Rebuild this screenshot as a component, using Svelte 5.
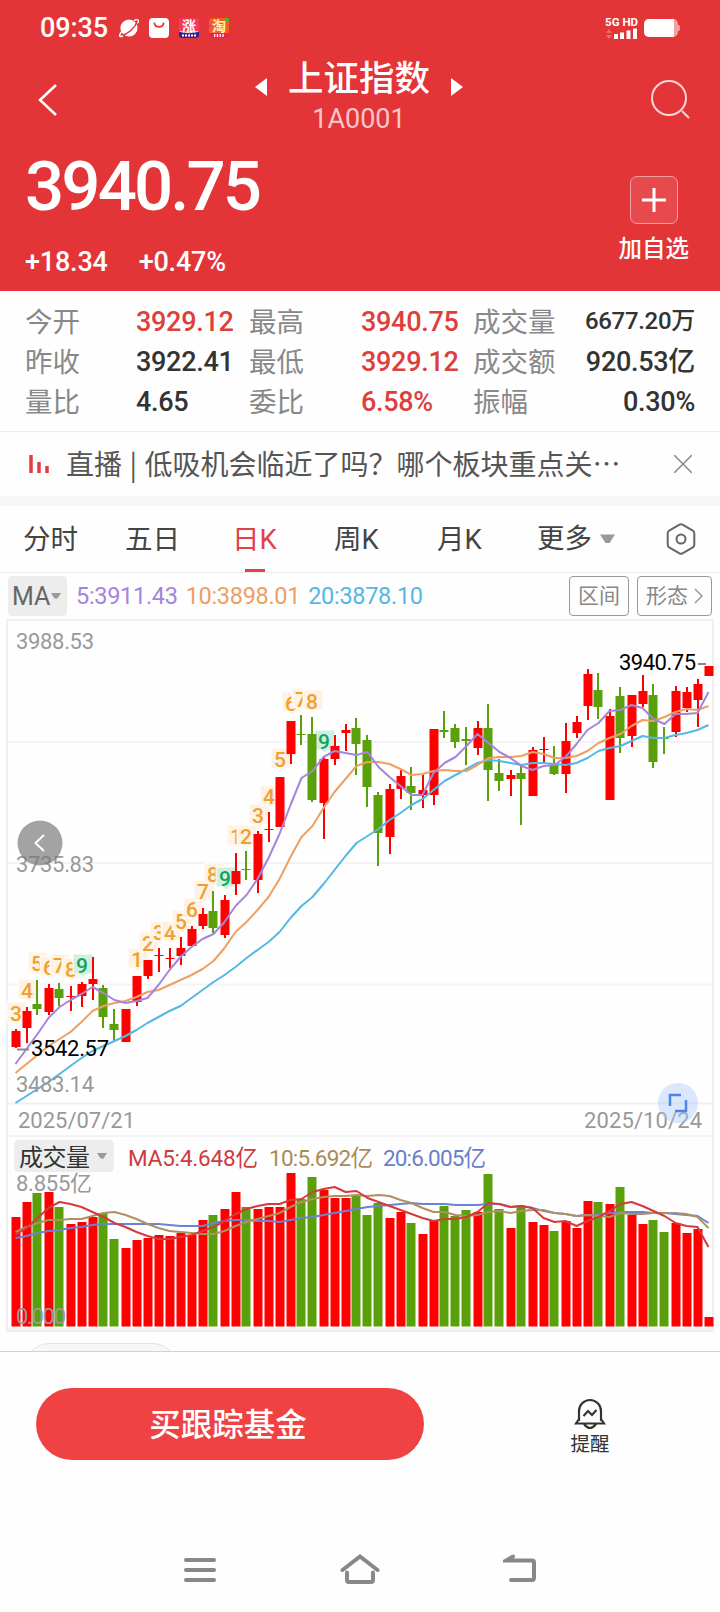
<script>
    const stats = [
        ["今开", "3929.12", "up", "最高", "3940.75", "up", "成交量", "6677.20万", "small"],
        ["昨收", "3922.41", "", "最低", "3929.12", "up", "成交额", "920.53亿", ""],
        ["量比", "4.65", "", "委比", "6.58%", "up", "振幅", "0.30%", "percent"],
    ];

    // direction, high, body top, body bottom, low, volume bar top
    const candles = [
        ["r", 1029, 1031, 1047, 1048, 1217],
        ["r", 1007, 1011, 1028, 1043, 1202],
        ["g", 980, 1004, 1009, 1015, 1193],
        ["r", 984, 988, 1012, 1015, 1192],
        ["g", 983, 989, 998, 1006, 1207],
        ["r", 986, 996, 997, 1011, 1224],
        ["r", 982, 984, 996, 1007, 1222],
        ["r", 957, 979, 984, 1000, 1217],
        ["g", 985, 988, 1017, 1028, 1213],
        ["g", 1009, 1024, 1030, 1042, 1239],
        ["r", 1009, 1009, 1042, 1042, 1248],
        ["r", 976, 976, 1002, 1006, 1240],
        ["r", 960, 960, 976, 979, 1238],
        ["r", 948, 955, 956, 972, 1235],
        ["r", 948, 958, 959, 968, 1236],
        ["r", 937, 948, 956, 965, 1233],
        ["r", 926, 929, 946, 947, 1235],
        ["r", 908, 914, 926, 929, 1220],
        ["g", 891, 911, 928, 933, 1215],
        ["r", 895, 900, 935, 938, 1209],
        ["r", 853, 871, 884, 895, 1192],
        ["g", 851, 869, 870, 880, 1207],
        ["r", 831, 834, 880, 893, 1209],
        ["r", 812, 829, 830, 842, 1207],
        ["r", 777, 777, 827, 827, 1207],
        ["r", 721, 721, 754, 764, 1173],
        ["g", 715, 734, 735, 745, 1199],
        ["g", 717, 734, 800, 802, 1177],
        ["r", 757, 759, 803, 839, 1190],
        ["r", 735, 746, 759, 765, 1198],
        ["r", 724, 730, 733, 751, 1198],
        ["g", 718, 728, 744, 775, 1195],
        ["g", 735, 740, 787, 807, 1215],
        ["g", 792, 795, 833, 866, 1203],
        ["r", 784, 789, 837, 854, 1218],
        ["r", 769, 776, 789, 799, 1212],
        ["g", 767, 786, 793, 810, 1223],
        ["r", 775, 790, 795, 808, 1234],
        ["r", 729, 729, 795, 805, 1220],
        ["g", 711, 730, 732, 738, 1206],
        ["g", 724, 728, 742, 748, 1216],
        ["g", 727, 739, 741, 765, 1210],
        ["r", 721, 728, 748, 755, 1212],
        ["g", 704, 728, 770, 801, 1174],
        ["g", 759, 773, 781, 791, 1209],
        ["r", 770, 775, 779, 796, 1228],
        ["g", 764, 773, 779, 825, 1207],
        ["r", 747, 750, 796, 796, 1222],
        ["r", 737, 749, 750, 763, 1225],
        ["g", 746, 763, 774, 775, 1231],
        ["r", 723, 741, 774, 793, 1221],
        ["r", 716, 722, 733, 738, 1228],
        ["r", 669, 674, 706, 720, 1201],
        ["g", 673, 690, 707, 719, 1202],
        ["r", 709, 716, 800, 800, 1204],
        ["g", 687, 696, 738, 753, 1187],
        ["r", 695, 695, 736, 747, 1215],
        ["r", 675, 691, 704, 707, 1224],
        ["g", 684, 695, 762, 768, 1220],
        ["g", 727, 738, 739, 754, 1232],
        ["r", 686, 691, 732, 737, 1223],
        ["r", 687, 692, 708, 712, 1233],
        ["r", 679, 684, 700, 727, 1229],
        ["r", 666, 666, 676, 676, 1317],
    ];

    // moving averages, one value per candle
    const ma5 = [1064, 1049, 1034, 1018, 1007, 1000, 994, 987, 993, 1000, 1003, 1001, 998, 985, 970, 957, 947, 939, 934, 922, 906, 895, 879, 858, 834, 805, 778, 771, 757, 751, 753, 755, 752, 767, 777, 786, 795, 795, 773, 763, 757, 746, 734, 743, 752, 758, 766, 770, 766, 765, 757, 744, 730, 723, 711, 710, 705, 708, 719, 724, 714, 714, 713, 692];
    const ma10 = [1073, 1064, 1055, 1046, 1039, 1032, 1022, 1011, 1006, 1003, 1001, 997, 992, 990, 985, 980, 975, 969, 961, 948, 932, 922, 910, 897, 879, 857, 837, 826, 808, 792, 779, 766, 762, 762, 764, 769, 775, 774, 771, 770, 771, 771, 765, 758, 757, 757, 756, 752, 754, 758, 758, 756, 751, 743, 738, 734, 726, 720, 721, 717, 712, 709, 710, 706];
    const ma20 = [1103, 1096, 1089, 1082, 1074, 1066, 1058, 1051, 1046, 1041, 1036, 1030, 1023, 1017, 1011, 1006, 998, 990, 982, 975, 967, 958, 950, 942, 932, 918, 906, 897, 884, 870, 856, 843, 836, 829, 820, 813, 805, 799, 790, 781, 775, 769, 763, 760, 761, 763, 765, 763, 763, 764, 765, 763, 758, 751, 748, 746, 741, 736, 738, 738, 735, 733, 730, 725];
    const vol5 = [1235, 1228, 1218, 1208, 1202, 1204, 1207, 1212, 1217, 1223, 1227, 1232, 1236, 1239, 1239, 1237, 1235, 1231, 1227, 1221, 1214, 1209, 1206, 1204, 1204, 1200, 1199, 1192, 1189, 1187, 1192, 1191, 1198, 1202, 1206, 1210, 1214, 1218, 1221, 1219, 1219, 1217, 1212, 1203, 1204, 1207, 1206, 1208, 1218, 1222, 1221, 1226, 1221, 1217, 1211, 1204, 1202, 1206, 1211, 1216, 1223, 1226, 1227, 1247];
    const vol10 = [1232, 1227, 1223, 1220, 1220, 1219, 1219, 1216, 1213, 1212, 1215, 1219, 1224, 1228, 1231, 1232, 1233, 1234, 1234, 1231, 1226, 1222, 1219, 1216, 1213, 1207, 1202, 1199, 1197, 1196, 1196, 1195, 1196, 1195, 1196, 1200, 1203, 1208, 1212, 1212, 1215, 1216, 1215, 1212, 1211, 1213, 1211, 1210, 1210, 1213, 1214, 1216, 1215, 1216, 1217, 1213, 1214, 1214, 1213, 1213, 1213, 1214, 1217, 1228];
    const vol20 = [1238, 1236, 1233, 1231, 1230, 1228, 1227, 1225, 1224, 1224, 1224, 1224, 1224, 1224, 1225, 1226, 1226, 1226, 1223, 1221, 1220, 1220, 1221, 1221, 1222, 1220, 1218, 1217, 1215, 1213, 1211, 1209, 1207, 1206, 1205, 1204, 1203, 1204, 1204, 1204, 1205, 1205, 1205, 1204, 1204, 1207, 1206, 1208, 1211, 1213, 1214, 1216, 1215, 1215, 1213, 1212, 1212, 1212, 1213, 1213, 1214, 1215, 1216, 1223];

    // candle index, digit, centre y
    const marks = [
        [0, 3, 1013], [1, 4, 990], [2, 5, 963], [3, 6, 967], [4, 7, 965], [5, 8, 969], [6, 9, 965],
        [11, 1, 959], [12, 2, 943], [13, 3, 932], [14, 4, 932], [15, 5, 921], [16, 6, 909], [17, 7, 891], [18, 8, 874], [19, 9, 878],
        [20, 1, 836], [21, 2, 836], [22, 3, 815], [23, 4, 796], [24, 5, 759], [25, 6, 703], [26, 7, 699], [27, 8, 701], [28, 9, 741],
    ];

    const cx = (i) => 16 + i * 11 - (candles[i][0] === "g" ? 1 : 0);
    const line = (ys) => ys.map((y, i) => `${15.5 + i * 11},${y}`).join(" ");
</script>

<div class="screen">
    <header>
        <div class="status">
            <span class="clock">09:35</span>
            <svg class="app" viewBox="0 0 20 20">
                <circle cx="10" cy="10" r="8.6" fill="#fff" />
                <path d="M1.500 18C9 16.500 16 10 18.500 3" stroke="#e33537" stroke-width="1.500" fill="none" />
                <path d="M3 13C-.5 17.500 0 19.500 4 18M15 2.500c4-2 5.500-.5 3.500 3" stroke="#fff" stroke-width="1.400" fill="none" />
            </svg>
            <svg class="app" viewBox="0 0 20 20">
                <rect width="20" height="20" rx="4" fill="#fff" />
                <path d="M5.500 5.500c1 4.500 8 4.500 9 0" stroke="#e33537" stroke-width="1.800" fill="none" stroke-linecap="round" />
            </svg>
            <svg class="app" viewBox="0 0 20 20">
                <rect width="20" height="20" rx="3" fill="#f8385a" />
                <path d="M0 14h20v3a3 3 0 0 1-3 3H3a3 3 0 0 1-3-3z" fill="#30209a" />
                <text x="10" y="13" font-size="14" font-weight="700" text-anchor="middle" fill="#fff">涨</text>
                <path d="M1 13.500q9 2.500 18 0" stroke="#ffd9c8" fill="none" />
                <path d="M3 17.500h14" stroke="#fff" stroke-width="2" stroke-dasharray="2 1" />
            </svg>
            <svg class="app" viewBox="0 0 20 20">
                <rect width="20" height="20" rx="3" fill="#fa5b22" />
                <path d="M0 15h20v2a3 3 0 0 1-3 3H3a3 3 0 0 1-3-3z" fill="#f01f58" />
                <circle cx="18" cy="2" r="2.500" fill="#55b51c" />
                <circle cx="1.500" cy="8" r="1.500" fill="#d13bd0" />
                <text x="10" y="13" font-size="14" font-weight="700" text-anchor="middle" fill="#fff3b8">淘</text>
                <path d="M5 17.500h10" stroke="#fff" stroke-width="3" stroke-dasharray="1.300 1.500" />
            </svg>
            <div class="signal">
                <span>5G HD</span>
                <svg width="32" height="12" viewBox="0 0 32 12">
                    <path d="M1 5l3-4 3 4zM1 7l3 4 3-4z" fill="#ee6a6a" />
                    <path d="M9 6h4v5H9zM15 4.500h4V11h-4zM21.500 2.500h4V11h-4zM28 .5h4V11h-4z" fill="#fff" />
                </svg>
            </div>
            <svg class="battery" width="37" height="20" viewBox="0 0 37 20">
                <rect x="1" y="1" width="34" height="18" rx="5" fill="#f4a0a1" />
                <path d="M35 7h1q1 0 1 3t-1 3h-1z" fill="#f4a0a1" />
                <path d="M6 1h25v18H6a5 5 0 0 1-5-5V6a5 5 0 0 1 5-5z" fill="#fff" />
            </svg>
        </div>

        <div class="title">
            <svg class="back" width="20" height="34" viewBox="0 0 20 34">
                <path d="M18 2L2 17l16 15" fill="none" stroke="#fff" stroke-width="2.500" />
            </svg>
            <div class="name">
                <div class="switch">
                    <svg width="12" height="18" viewBox="0 0 12 18"><path d="M12 0v18L0 9z" fill="#fff" /></svg>
                    <h1>上证指数</h1>
                    <svg width="12" height="18" viewBox="0 0 12 18"><path d="M0 0v18l12-9z" fill="#fff" /></svg>
                </div>
                <span class="code">1A0001</span>
            </div>
            <svg width="40" height="40" viewBox="0 0 40 40">
                <circle cx="19" cy="19" r="17" fill="none" stroke="#fbd5d5" stroke-width="2" />
                <path d="M32 32l7 7" stroke="#fbd5d5" stroke-width="2" />
            </svg>
        </div>

        <div class="quote">
            <div>
                <div class="price">3940.75</div>
                <div class="change"><span>+18.34</span><span>+0.47%</span></div>
            </div>
            <div class="favorite">
                <span class="plus">
                    <svg width="24" height="24" viewBox="0 0 24 24"><path d="M12 0v24M0 12h24" stroke="#fff" stroke-width="3" /></svg>
                </span>
                <span>加自选</span>
            </div>
        </div>
    </header>

    <section class="stats">
        {#each stats as s}
            <span class="label">{s[0]}</span><span class={s[2]}>{s[1]}</span>
            <span class="label">{s[3]}</span><span class={s[5]}>{s[4]}</span>
            <span class="label">{s[6]}</span><span class="last {s[8]}">{s[7]}</span>
        {/each}
    </section>

    <section class="notice">
        <svg width="22" height="20" viewBox="0 0 22 20">
            <path d="M3 1v18M11 8v11M19 12v7" stroke="#e33b45" stroke-width="3.500" />
        </svg>
        <p>直播 | 低吸机会临近了吗？哪个板块重点关…</p>
        <svg width="18" height="18" viewBox="0 0 18 18">
            <path d="M0 0l18 18M18 0L0 18" stroke="#888" stroke-width="1.500" />
        </svg>
    </section>

    <nav class="tabs">
        <span>分时</span>
        <span>五日</span>
        <span class="active">日K</span>
        <span>周K</span>
        <span>月K</span>
        <span class="more">更多<svg width="15" height="10" viewBox="0 0 15 10"><path d="M0 .5h15L9.500 9h-4z" fill="#999" /></svg></span>
        <svg class="gear" width="30" height="32" viewBox="0 0 30 32">
            <path d="M13.500 1.700q1.500-.9 3 0l10.300 6q1.500.8 1.500 2.600v11.400q0 1.800-1.500 2.600l-10.300 6q-1.500.9-3 0l-10.300-6q-1.500-.8-1.500-2.600V10.300q0-1.800 1.500-2.600z" fill="none" stroke="#666" stroke-width="2" />
            <circle cx="15" cy="16" r="4.500" fill="none" stroke="#666" stroke-width="2" />
        </svg>
    </nav>

    <section class="indicator">
        <span class="picker">MA<svg width="10" height="6" viewBox="0 0 10 6"><path d="M0 0h10L6.500 5.500h-3z" fill="#999" /></svg></span>
        <span class="ma five">5:3911.43</span>
        <span class="ma ten">10:3898.01</span>
        <span class="ma twenty">20:3878.10</span>
        <span class="outlined range">区间</span>
        <span class="outlined shape">形态<svg width="9" height="16" viewBox="0 0 9 16"><path d="M1 1l7 7-7 7" fill="none" stroke="#999" stroke-width="1.500" /></svg></span>
    </section>

    <svg class="chart" width="720" height="732" viewBox="0 619 720 732">
        <g stroke="#efefef" stroke-width="2">
            <path d="M6 620H714M6 1103.500H714M7 620V1331M713 620V1331M6 1331H714" />
            <path d="M8 742H713M8 863H713M8 984.500H713M8 1136H713M8 1329H713" stroke="#f3f3f3" />
        </g>

        {#each marks as [i, digit, y]}
            <g class="mark" class:nine={digit === 9}>
                <path d="M{cx(i) - 9} {y - 11}h20v20h-6.500l-3.500 3-3.500-3h-6.500z" />
                <text x={cx(i)} y={y + 7.5} text-anchor="middle">{digit}</text>
            </g>
        {/each}

        {#each candles as [dir, high, top, bottom, low, vol], i}
            <g class={dir}>
                <rect x={cx(i) - 1} y={high} width="2" height={low - high} />
                <rect x={cx(i) - 4.5} y={top} width="9" height={Math.max(bottom - top, 1)} />
                <rect x={cx(i) - 4.5} y={vol} width="9" height={1326.5 - vol} />
            </g>
        {/each}

        <g fill="none" stroke-width="2" stroke-linejoin="round">
            <polyline points={line(ma20)} stroke="#55b7e4" />
            <polyline points={line(ma10)} stroke="#eda062" />
            <polyline points={line(ma5)} stroke="#a585dc" />
            <polyline points={line(vol20)} stroke="#6a83d3" />
            <polyline points={line(vol10)} stroke="#b09060" />
            <polyline points={line(vol5)} stroke="#d53a3c" />
        </g>

        <g class="axis">
            <text x="16" y="649" textLength="78">3988.53</text>
            <text x="16" y="872" textLength="78">3735.83</text>
            <text x="16" y="1092" textLength="78">3483.14</text>
            <text x="18" y="1128" textLength="117">2025/07/21</text>
            <text x="584" y="1128" textLength="118">2025/10/24</text>
            <text x="16" y="1191" textLength="76">8.855亿</text>
            <text x="16" y="1324" textLength="50">0.000</text>
        </g>
        <g class="extreme">
            <path d="M17 1049.500h12M698 664h8" stroke="#888" stroke-width="2" />
            <text x="31" y="1056" textLength="78">3542.57</text>
            <text x="619" y="670" textLength="77">3940.75</text>
        </g>

        <circle cx="40" cy="843" r="22.500" fill="#777" opacity=".68" />
        <path d="M44 835l-8.500 8 8.500 8" fill="none" stroke="#fff" stroke-width="2" />
        <circle cx="678" cy="1103" r="20" fill="#a8c5fb" opacity=".4" />
        <path d="M670 1106v-11h11M686 1100v11h-11" fill="none" stroke="#4a87e8" stroke-width="2.500" />

        <rect x="14" y="1140" width="100" height="32" rx="4" fill="#ededed" />
        <text x="19" y="1166" font-size="24" textLength="71" fill="#333">成交量</text>
        <path d="M97 1153h10l-3.500 5.500h-3z" fill="#999" />
        <g class="volma">
            <text x="128" y="1166" textLength="130" fill="#cf3a3d">MA5:4.648亿</text>
            <text x="269" y="1166" textLength="104" fill="#a98a58">10:5.692亿</text>
            <text x="383" y="1166" textLength="103" fill="#6680cb">20:6.005亿</text>
        </g>
        <path d="M29 1354q8-10.500 21-10.500h102q13 0 21 10.500z" fill="#f7f7f7" stroke="#e3e3e3" />
    </svg>

    <footer>
        <button>买跟踪基金</button>
        <div class="remind">
            <svg width="32" height="32" viewBox="0 0 32 32" fill="none" stroke="#333" stroke-width="2.200">
                <path d="M5 23V13a11 11 0 0 1 22 0v10M5 21l-3 4.500h28l-3-4.500M10 26q6 8 12 0" />
                <path d="M9.500 18l4.500-5 4 4 4.500-5" />
            </svg>
            <span>提醒</span>
        </div>
    </footer>

    <div class="system">
        <svg width="32" height="32" viewBox="0 0 32 32"><path d="M2 6h28M2 16h28M2 26h28" /></svg>
        <svg width="40" height="32" viewBox="0 0 40 32"><path d="M2.500 16L20 2.500 37.500 16M7 18.500V26q0 2 2 2h22q2 0 2-2v-7.500" /></svg>
        <svg width="34" height="32" viewBox="0 0 34 32"><path d="M10 2.500L3 6.500h26q2 0 2 2V24q0 2-2 2H8" /></svg>
    </div>
</div>

<style>
    :global(body) {
        background: #fff;
    }

    .screen {
        width: 720px;
        height: 1612px;
        overflow: hidden;
        display: flex;
        flex-direction: column;
        background: #fefefe;
        color: #333;
        font-family: Roboto, "Noto Sans CJK SC", sans-serif;
    }

    svg {
        display: block;
        flex: none;
    }

    header {
        height: 291px;
        background: #e33537;
        color: #fff;
    }

    .status {
        height: 56px;
        display: flex;
        align-items: center;
        padding: 0 40px;
    }

    .clock {
        width: 79px;
        font-size: 27px;
        font-weight: 500;
        letter-spacing: -0.1px;
    }

    .app {
        width: 20px;
        height: 20px;
        margin-right: 10px;
    }

    .signal {
        margin-left: auto;
        margin-right: 5px;
        font-size: 11.5px;
        font-weight: 700;
        line-height: 11px;
    }

    .title {
        height: 86px;
        display: flex;
        align-items: center;
        justify-content: space-between;
        padding: 0 30px 0 38px;
    }

    .back {
        margin-top: 2px;
    }

    .name {
        display: flex;
        flex-direction: column;
        align-items: center;
        margin: -8px 0 0 10px;
    }

    .switch {
        display: flex;
        align-items: center;
        gap: 21px;
    }

    h1 {
        margin: -2px 0 0;
        font-size: 35.5px;
        font-weight: 500;
        line-height: 48px;
    }

    .switch svg {
        margin-top: 14px;
    }

    .code {
        margin-top: 1px;
        color: #f9c6c7;
        font-size: 27px;
        line-height: 30px;
    }

    .quote {
        display: flex;
        justify-content: space-between;
        padding: 0 31px 0 25px;
    }

    .price {
        font-size: 69px;
        font-weight: 500;
        line-height: 90px;
        letter-spacing: -2.9px;
    }

    .change {
        display: flex;
        gap: 31px;
        margin-top: 12px;
        font-size: 27px;
        font-weight: 500;
        line-height: 36px;
        letter-spacing: -0.2px;
    }

    .favorite {
        display: flex;
        flex-direction: column;
        align-items: center;
        padding-top: 34px;
        font-size: 23.5px;
        font-weight: 500;
        line-height: 50px;
    }

    .plus {
        width: 46px;
        height: 46px;
        display: flex;
        align-items: center;
        justify-content: center;
        border: 1px solid #f0a0a1;
        border-radius: 7px;
        background: #e64a4c;
    }

    .stats {
        height: 141px;
        box-sizing: border-box;
        display: grid;
        grid-template-columns: 111px 113px 112px 112px 97px 125px;
        grid-template-rows: repeat(3, 40px);
        align-items: center;
        padding: 11px 25px 0 25px;
        border-bottom: 1px solid #ebebeb;
        font-size: 27px;
        font-weight: 500;
        letter-spacing: -0.3px;
        white-space: nowrap;
    }

    .label {
        margin-top: -4px;
        color: #888;
        font-size: 27.5px;
        font-weight: 400;
        letter-spacing: 0;
    }

    .up {
        color: #dc3f3c;
    }

    .last {
        justify-self: end;
        margin-top: -5px;
    }

    .small {
        font-size: 24px;
        margin-top: -7px;
    }

    .percent {
        margin-top: 0;
    }

    .notice {
        height: 60px;
        display: flex;
        align-items: center;
        padding: 2px 28px 2px 28px;
        border-bottom: 10px solid #f7f7f7;
    }

    .notice p {
        flex: 1;
        margin: -3px 0 0 16px;
        color: #555;
        font-family: "Noto Sans CJK SC", sans-serif;
        font-size: 28px;
        word-spacing: 1.2px;
        white-space: nowrap;
    }

    .tabs {
        height: 67px;
        box-sizing: border-box;
        display: grid;
        grid-template-columns: 102px 107px 102px 103px 100px 129px 30px;
        align-items: center;
        padding-left: 23px;
        border-bottom: 1px solid #ebebeb;
        color: #444;
        font-size: 27.5px;
        white-space: nowrap;
    }

    .tabs span {
        height: 66px;
        line-height: 68px;
    }

    .tabs .active {
        width: 45px;
        color: #e2404a;
        background: linear-gradient(#e2404a, #e2404a) 13px bottom / 20px 3px no-repeat;
    }

    .more {
        display: flex;
        align-items: center;
        gap: 8px;
    }

    .indicator {
        height: 46px;
        display: flex;
        align-items: center;
        padding: 0 8px;
        font-size: 23.5px;
        white-space: nowrap;
    }

    .picker {
        width: 55px;
        height: 40px;
        display: flex;
        align-items: center;
        gap: 1px;
        padding-left: 4px;
        border-radius: 4px;
        background: #ededed;
        color: #666;
        font-size: 25px;
    }

    .ma {
        margin-left: 9px;
        letter-spacing: -0.3px;
    }

    .five {
        color: #a585dc;
    }

    .ten {
        margin-left: 8px;
        color: #eda062;
    }

    .twenty {
        margin-left: 8px;
        color: #55b7e4;
    }

    .outlined {
        height: 38px;
        line-height: 36px;
        display: flex;
        align-items: center;
        justify-content: center;
        gap: 6px;
        border: 1px solid #999;
        border-radius: 4px;
        color: #888;
        font-size: 21px;
    }

    .range {
        width: 58px;
        margin-left: auto;
        margin-right: 8px;
    }

    .shape {
        width: 73px;
    }

    .r {
        fill: #fe0000;
    }

    .g {
        fill: #5aa00b;
    }

    .mark path {
        fill: #fef2e4;
        stroke: #fff;
    }

    .mark text {
        fill: #f0a02c;
        font-size: 21px;
        font-weight: 500;
    }

    .mark.nine path {
        fill: #d0efe0;
    }

    .mark.nine text {
        fill: #12a25c;
    }

    .axis {
        fill: #999;
        font-size: 22px;
    }

    .extreme {
        fill: #000;
        font-size: 22px;
    }

    .volma {
        font-size: 22.5px;
    }

    footer {
        height: 160px;
        display: flex;
        align-items: flex-start;
        padding: 36px 36px 0;
        border-top: 1px solid #d2d2d2;
        box-sizing: border-box;
    }

    button {
        width: 388px;
        height: 72px;
        padding: 0 4px 4px 0;
        border: 0;
        border-radius: 36px;
        background: #f04243;
        color: #fff;
        font: 500 31.5px "Noto Sans CJK SC", sans-serif;
    }

    .remind {
        display: flex;
        flex-direction: column;
        align-items: center;
        width: 40px;
        margin: 10px 0 0 146px;
        font-size: 19.5px;
        line-height: 30px;
    }

    .system {
        display: flex;
        align-items: center;
        justify-content: space-between;
        padding: 43px 183px 0 184px;
        fill: none;
        stroke: #888;
        stroke-width: 4;
        stroke-linecap: round;
    }
</style>
